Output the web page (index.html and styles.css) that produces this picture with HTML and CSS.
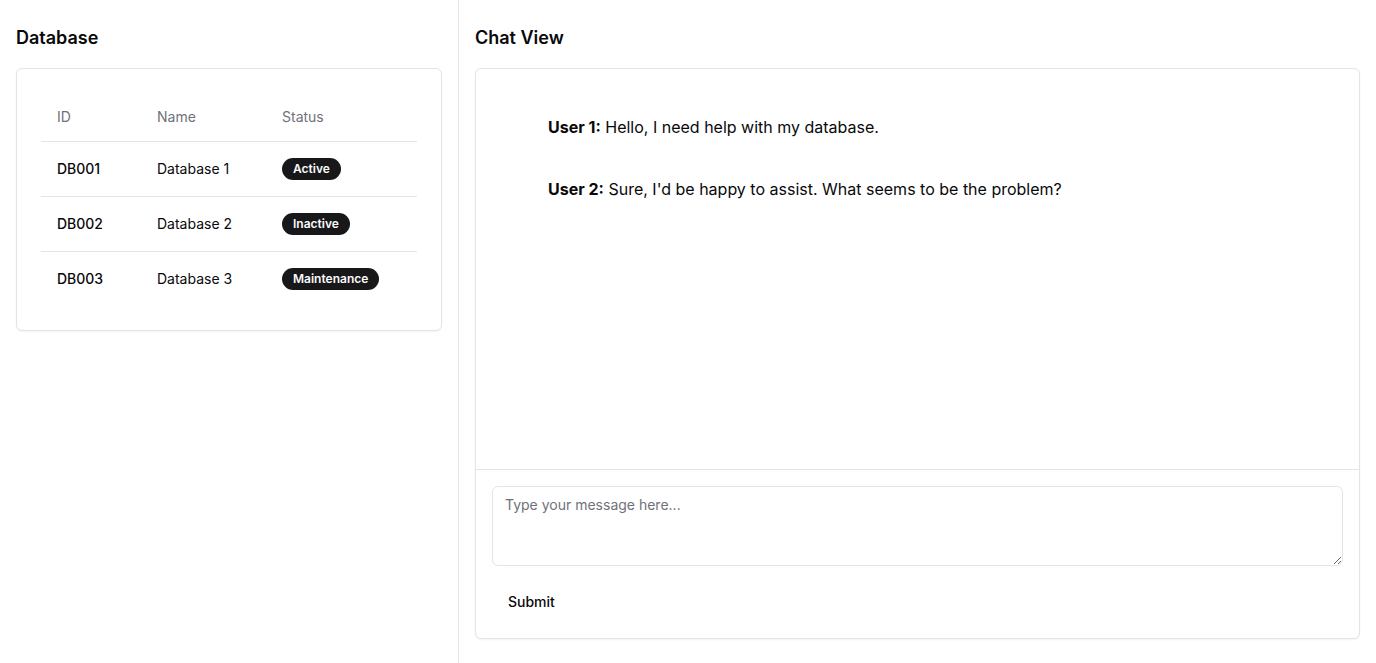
FILE: index.html
```html
<!DOCTYPE html>
<html lang="en">
<head>
<meta charset="utf-8">
<title>Database Chat</title>
<link rel="stylesheet" href="styles.css">
</head>
<body>
<div class="layout">
  <aside class="panel panel-left">
    <h2 class="panel-title">Database</h2>
    <div class="card db-card">
      <table class="db-table">
        <colgroup>
          <col class="col-id"><col class="col-name"><col class="col-status">
        </colgroup>
        <thead>
          <tr><th>ID</th><th>Name</th><th>Status</th></tr>
        </thead>
        <tbody>
          <tr><td class="id">DB001</td><td>Database 1</td><td><span class="badge">Active</span></td></tr>
          <tr><td class="id">DB002</td><td>Database 2</td><td><span class="badge">Inactive</span></td></tr>
          <tr><td class="id">DB003</td><td>Database 3</td><td><span class="badge">Maintenance</span></td></tr>
        </tbody>
      </table>
    </div>
  </aside>
  <main class="panel panel-right">
    <h2 class="panel-title">Chat View</h2>
    <div class="card chat-card">
      <div class="messages">
        <p class="message"><strong>User 1:</strong> Hello, I need help with my database.</p>
        <p class="message"><strong>User 2:</strong> Sure, I'd be happy to assist. What seems to be the problem?</p>
      </div>
      <form class="composer">
        <textarea class="composer-input" placeholder="Type your message here..."></textarea>
        <div class="composer-actions">
          <button type="button" class="btn-ghost">Submit</button>
        </div>
      </form>
    </div>
  </main>
</div>
</body>
</html>
```

FILE: styles.css
```css
* { box-sizing: border-box; }
html, body { margin: 0; padding: 0; }
body {
  font-family: Inter, "Liberation Sans", sans-serif;
  color: #09090b;
  background: #ffffff;
}
.layout {
  display: flex;
  height: 663px;
}
.panel {
  padding: 24px 16px 16px;
}
.panel-left {
  width: 459px;
  flex: none;
  border-right: 1px solid #e4e4e7;
}
.panel-right {
  flex: 1;
}
.panel-title {
  margin: 0 0 16px;
  font-size: 18px;
  line-height: 28px;
  font-weight: 600;
}
.card {
  border: 1px solid #e4e4e7;
  border-radius: 6px;
  background: #fff;
  box-shadow: 0 1px 2px rgba(0,0,0,0.05);
}
.db-card {
  padding: 23px 24px 24px;
}
.db-table {
  width: 100%;
  border-collapse: collapse;
  font-size: 14px;
  line-height: 20px;
}
.col-id { width: 100px; }
.col-name { width: 125px; }
.db-table th {
  height: 49px;
  padding: 2px 16px 0;
  text-align: left;
  font-weight: 400;
  color: #71717a;
  border-bottom: 1px solid #e4e4e7;
}
.db-table td {
  height: 55px;
  padding: 0 16px;
  border-bottom: 1px solid #e4e4e7;
  vertical-align: middle;
}
.db-table tbody tr:last-child td { border-bottom: 0; height: 55px; }
.db-table td.id { font-weight: 500; }
.badge {
  display: inline-block;
  background: #18181b;
  color: #fafafa;
  font-size: 12px;
  line-height: 16px;
  font-weight: 600;
  padding: 2px 10px;
  border: 1px solid transparent;
  border-radius: 9999px;
}
.chat-card {
  display: flex;
  flex-direction: column;
  height: 571px;
}
.messages {
  height: 401px;
  border-bottom: 1px solid #e4e4e7;
  padding: 46px 24px 24px 72px;
  display: flex;
  flex-direction: column;
  gap: 38px;
}
.message {
  margin: 0;
  font-size: 16px;
  line-height: 24px;
}
.message strong { font-weight: 700; }
.composer {
  padding: 16px;
  display: flex;
  flex-direction: column;
  gap: 16px;
}
.composer-input {
  width: 100%;
  height: 80px;
  border: 1px solid #e4e4e7;
  border-radius: 6px;
  padding: 8px 12px;
  font-family: inherit;
  font-size: 14px;
  line-height: 20px;
  color: #09090b;
  resize: vertical;
}
.composer-input::placeholder { color: #71717a; }
.composer-actions { display: flex; }
.btn-ghost {
  height: 40px;
  padding: 0 16px 2px;
  border: 0;
  background: transparent;
  border-radius: 6px;
  font-family: inherit;
  font-size: 14px;
  font-weight: 500;
  color: #09090b;
}
```
